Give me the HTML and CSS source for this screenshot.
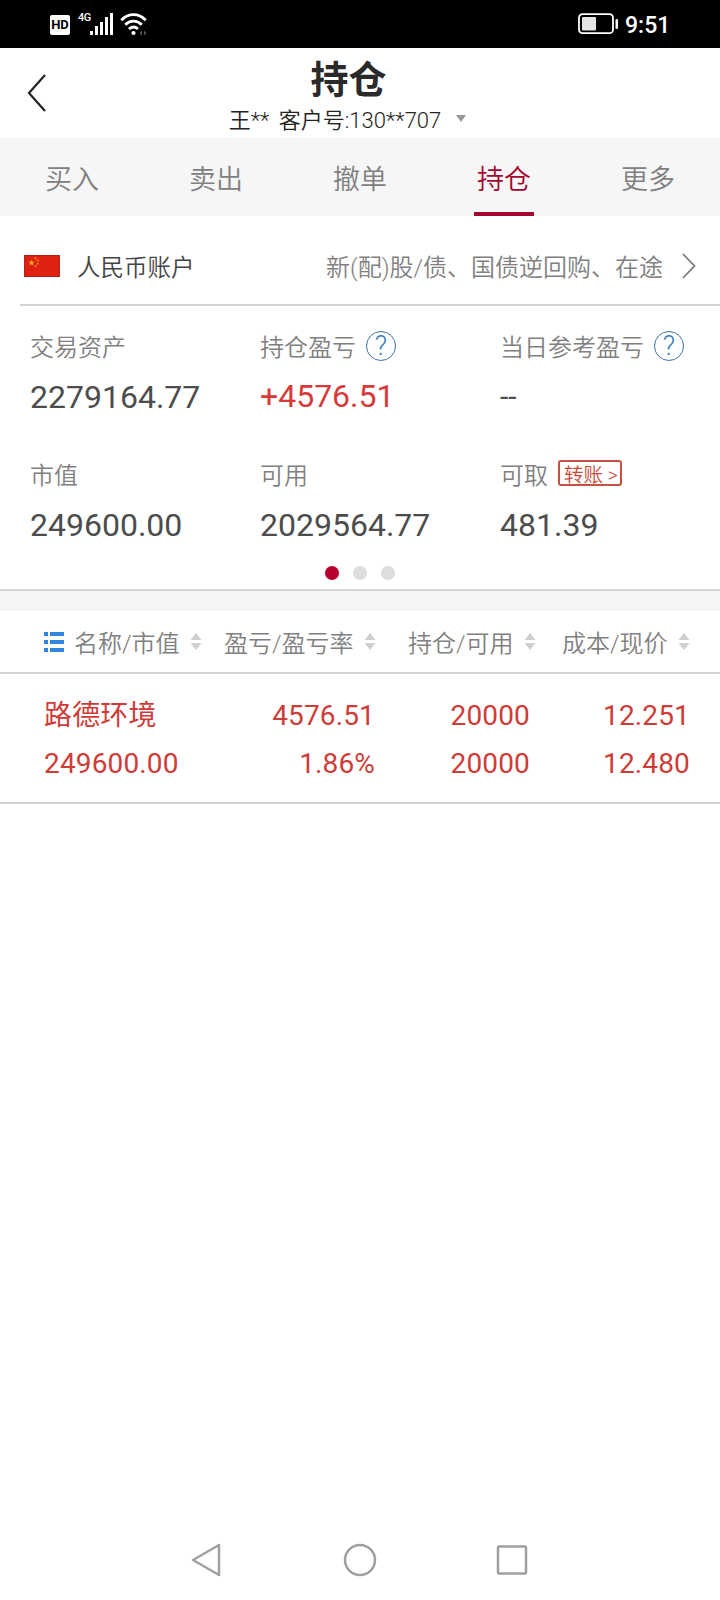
FILE: index.html
```
<!DOCTYPE html>
<html lang="zh-CN">
<head>
    <meta charset="UTF-8">
    <meta name="viewport" content="width=device-width, initial-scale=1.0">
    <title>持仓</title>
    <link rel="stylesheet" href="styles.css">
</head>
<body>
    <!-- Status Bar -->
    <div class="status-bar">
        <div class="status-left">
            <span class="hd">HD</span>
            <span class="network">4G</span>
            <svg class="signal" width="24" height="22" viewBox="0 0 24 22" fill="#fff">
                <rect x="0" y="18" width="3" height="4"/>
                <rect x="5" y="13" width="3" height="9"/>
                <rect x="10" y="9" width="3" height="13"/>
                <rect x="15" y="4" width="3" height="18"/>
                <rect x="20" y="0" width="3" height="22"/>
            </svg>
            <svg class="wifi" width="28" height="23" viewBox="0 0 28 23" fill="none" stroke="#fff" stroke-width="2.8">
                <path d="M1.3 7.2C8.5-.2 18.5-.2 25.7 7.2"/>
                <path d="M5.2 11.8c5-4.8 11.6-4.8 16.6 0"/>
                <path d="M9 16c3-2.6 6-2.6 9 0"/>
                <circle cx="13.5" cy="20" r="2.1" fill="#fff" stroke="none"/>
                <path d="M22 17.5v5L19.5 20zM24 17.5v5l2.5-2.5z" fill="#555" stroke="none"/>
            </svg>
        </div>
        <div class="status-right">
            <svg width="42" height="22" viewBox="0 0 42 22">
                <rect x="1" y="1.2" width="34" height="19" rx="3.5" fill="none" stroke="#fff" stroke-width="1.8"/>
                <rect x="4" y="4" width="14" height="13.5" rx="1" fill="#e4e4e4"/>
                <rect x="37.5" y="6" width="2.5" height="10" rx="1" fill="#fff"/>
            </svg>
            <span class="clock">9:51</span>
        </div>
    </div>

    <!-- Header -->
    <header class="header">
        <svg class="back" width="20" height="38" viewBox="0 0 20 38" fill="none" stroke="#222" stroke-width="2.2">
            <path d="M18 1L2 19l16 18"/>
        </svg>
        <div class="header-text">
            <h1>持仓</h1>
            <div class="customer">
                <span>王** 客户号:130**707</span>
                <span class="caret"></span>
            </div>
        </div>
    </header>

    <!-- Tabs -->
    <nav class="tabs">
        <a class="tab">买入</a>
        <a class="tab">卖出</a>
        <a class="tab">撤单</a>
        <a class="tab active">持仓</a>
        <a class="tab">更多</a>
    </nav>

    <!-- Account -->
    <div class="account">
        <svg class="flag" width="36" height="22" viewBox="0 0 36 22">
            <rect width="36" height="22" fill="#de2110"/>
            <rect x=".5" y=".5" width="35" height="21" fill="none" stroke="#8e2a20" stroke-opacity=".6"/>
            <path d="M7.5 4.5l.9 2.2 2.3.1-1.8 1.5.6 2.3-2-1.3-2 1.3.6-2.3-1.8-1.5 2.3-.1z" fill="#f5a623"/>
            <g fill="#f08a1e">
                <circle cx="11.5" cy="3.2" r="1"/>
                <circle cx="13.7" cy="5.5" r="1"/>
                <circle cx="13.7" cy="8.8" r="1"/>
                <circle cx="11.5" cy="11" r="1"/>
            </g>
        </svg>
        <span class="account-name">人民币账户</span>
        <span class="account-links">新(配)股/债、国债逆回购、在途</span>
        <svg class="more" width="14" height="28" viewBox="0 0 14 28" fill="none" stroke="#777" stroke-width="1.7">
            <path d="M1 2l11.5 12L1 26"/>
        </svg>
    </div>

    <!-- Asset Summary -->
    <section class="summary">
        <div class="assets">
            <div class="asset">
                <div class="label"><span>交易资产</span></div>
                <div class="value">2279164.77</div>
            </div>
            <div class="asset">
                <div class="label"><span>持仓盈亏</span><span class="help">?</span></div>
                <div class="value up">+4576.51</div>
            </div>
            <div class="asset">
                <div class="label"><span>当日参考盈亏</span><span class="help">?</span></div>
                <div class="value none">--</div>
            </div>
            <div class="asset">
                <div class="label"><span>市值</span></div>
                <div class="value">249600.00</div>
            </div>
            <div class="asset">
                <div class="label"><span>可用</span></div>
                <div class="value">2029564.77</div>
            </div>
            <div class="asset">
                <div class="label"><span>可取</span><span class="transfer">转账 &gt;</span></div>
                <div class="value">481.39</div>
            </div>
        </div>
        <div class="dots">
            <span class="dot current"></span>
            <span class="dot"></span>
            <span class="dot"></span>
        </div>
    </section>

    <!-- Positions -->
    <section class="positions">
        <div class="columns">
            <div class="column">
                <svg class="list-icon" width="20" height="20" viewBox="0 0 20 20" fill="#2f86dc">
                    <path d="M0 0h4v4H0zM6 0h14v4H6zM0 8h4v4H0zM6 8h14v4H6zM0 16h4v4H0zM6 16h14v4H6z"/>
                </svg>
                <span>名称/市值</span>
                <span class="sort"></span>
            </div>
            <div class="column"><span>盈亏/盈亏率</span><span class="sort"></span></div>
            <div class="column"><span>持仓/可用</span><span class="sort"></span></div>
            <div class="column"><span>成本/现价</span><span class="sort"></span></div>
        </div>
        <div class="position">
            <div class="cell name"><span>路德环境</span><span>249600.00</span></div>
            <div class="cell"><span>4576.51</span><span>1.86%</span></div>
            <div class="cell"><span>20000</span><span>20000</span></div>
            <div class="cell"><span>12.251</span><span>12.480</span></div>
        </div>
    </section>

    <!-- System Navigation -->
    <footer class="system-nav">
        <svg width="34" height="34" viewBox="0 0 34 34"><path d="M28 2v30L2 17z"/></svg>
        <svg width="34" height="34" viewBox="0 0 34 34"><circle cx="17" cy="17" r="15"/></svg>
        <svg width="34" height="34" viewBox="0 0 34 34"><rect x="3" y="3.5" width="28" height="27" rx="1"/></svg>
    </footer>
</body>
</html>
```
FILE: styles.css
```
/* General Styling */
* {
    box-sizing: border-box;
}

body {
    margin: 0;
    height: 1600px;
    display: flex;
    flex-direction: column;
    font-family: Roboto, "Noto Sans CJK SC", sans-serif;
    font-weight: 350;
    background: #fff;
    color: #333;
}

svg {
    display: block;
    flex-shrink: 0;
}

/* Status Bar */
.status-bar {
    height: 48px;
    padding: 0 50px;
    display: flex;
    justify-content: space-between;
    align-items: center;
    background: #000;
    color: #fff;
}

.status-left,
.status-right {
    display: flex;
    align-items: center;
}

.hd {
    width: 20px;
    height: 20px;
    margin-top: 2px;
    border-radius: 2px;
    background: #fff;
    color: #000;
    font-size: 13px;
    font-weight: 700;
    line-height: 20px;
    text-align: center;
}

.network {
    width: 12px;
    margin: -12px 0 0 8px;
    font-size: 11px;
    font-weight: 500;
    line-height: 12px;
    letter-spacing: -0.5px;
}

.wifi {
    margin-left: 6px;
}

.clock {
    width: 45px;
    margin: 2px 0 0 5px;
    font-size: 23px;
    font-weight: 500;
}

/* Header */
.header {
    height: 90px;
    padding-left: 27px;
    display: flex;
    align-items: center;
}

.header-text {
    flex: 1;
    padding-right: 91px;
    display: flex;
    flex-direction: column;
    align-items: center;
}

h1 {
    margin: 5px 0 0;
    font-size: 38px;
    font-weight: 600;
    line-height: 50px;
    color: #2a2a2a;
    padding-left: 21px;
}

.customer {
    display: flex;
    align-items: center;
    padding-left: 19px;
    font-size: 22px;
    line-height: 32px;
    word-spacing: 4px;
    color: #222;
}

.caret {
    margin: -4px 0 0 15px;
    border: 5px solid transparent;
    border-top: 7px solid #999;
    border-bottom: 0;
}

/* Tabs */
.tabs {
    height: 78px;
    display: flex;
    background: #f6f6f6;
}

.tab {
    flex: 1;
    display: flex;
    flex-direction: column;
    align-items: center;
    padding-top: 3px;
    font-size: 27px;
    line-height: 78px;
    color: #808080;
}

.tab.active {
    color: #a2062f;
}

.tab.active::after {
    content: "";
    width: 60px;
    height: 4px;
    margin-top: -7px;
    background: #a2062f;
}

/* Account */
.account {
    height: 90px;
    margin-left: 20px;
    padding: 11px 24px 0 4px;
    display: flex;
    align-items: center;
    border-bottom: 2px solid #d4d4d4;
    font-size: 24px;
}

.account-name {
    margin-left: 17px;
    font-size: 23.5px;
    color: #444;
}

.account-links {
    margin-left: auto;
    color: #808080;
}

.more {
    margin-left: 19px;
}

/* Asset Summary */
.summary {
    height: 285px;
    padding: 24px 0 0 30px;
    border-bottom: 2px solid #d4d4d4;
}

.assets {
    display: grid;
    grid-template-columns: 230px 240px 1fr;
    row-gap: 43px;
}

.label {
    display: flex;
    align-items: center;
    height: 32px;
    font-size: 24px;
    line-height: 32px;
    color: #808080;
}

.label span:first-child {
    padding-top: 3px;
}

.value {
    height: 40px;
    margin-top: 13px;
    padding-top: 2px;
    font-size: 32px;
    font-weight: 400;
    line-height: 40px;
    color: #4c4c4c;
}

.value.up {
    padding-top: 1px;
    color: #d83a3a;
}

.value.none {
    font-size: 30px;
}

.help {
    width: 30px;
    height: 30px;
    margin-left: 10px;
    border: 1px solid #3f74a5;
    border-radius: 50%;
    font-size: 27px;
    line-height: 28px;
    text-align: center;
    color: #3b7cba;
}

.transfer {
    height: 26px;
    margin: -2px 0 0 10px;
    padding: 0 2px 0 4px;
    border: 2px solid #c4523f;
    border-radius: 3px;
    font-size: 19.5px;
    line-height: 28px;
    color: #cc4a34;
}

.dots {
    display: flex;
    justify-content: center;
    gap: 14px;
    margin: 23px 0 0 -30px;
}

.dot {
    width: 14px;
    height: 14px;
    border-radius: 50%;
    background: #ddd;
}

.dot.current {
    background: #b8002e;
}

/* Positions */
.positions {
    border-top: 20px solid #f6f6f6;
}

.columns {
    height: 63px;
    padding: 0 30px 0 44px;
    display: grid;
    grid-template-columns: 180px 184px 154px 128px;
    align-items: center;
    border-bottom: 2px solid #d4d4d4;
    font-size: 24px;
    color: #808080;
}

.column {
    display: flex;
    align-items: center;
    white-space: nowrap;
}

.list-icon {
    margin-right: 10px;
}

/* Up and down arrows beside each column title */
.sort {
    width: 11px;
    height: 17px;
    margin-left: 11px;
    background: #d0d0d0;
    clip-path: polygon(50% 0, 100% 41%, 0 41%, 0 59%, 100% 59%, 50% 100%, 0 59%, 0 41%);
}

.position {
    height: 130px;
    padding: 18px 30px 0 44px;
    display: grid;
    grid-template-columns: 150px 181px 155px 160px;
    border-bottom: 2px solid #d4d4d4;
    font-size: 28px;
    font-weight: 400;
    line-height: 48px;
    color: #cf3c38;
}

.cell {
    display: flex;
    flex-direction: column;
    text-align: right;
    letter-spacing: 0.15px;
}

.cell.name {
    text-align: left;
}

/* System Navigation */
.system-nav {
    margin-top: auto;
    height: 80px;
    padding: 0 191px;
    display: flex;
    justify-content: space-between;
    align-items: center;
}

.system-nav svg {
    fill: none;
    stroke: #a0a0a0;
    stroke-width: 2.5;
    stroke-linejoin: round;
}
```
